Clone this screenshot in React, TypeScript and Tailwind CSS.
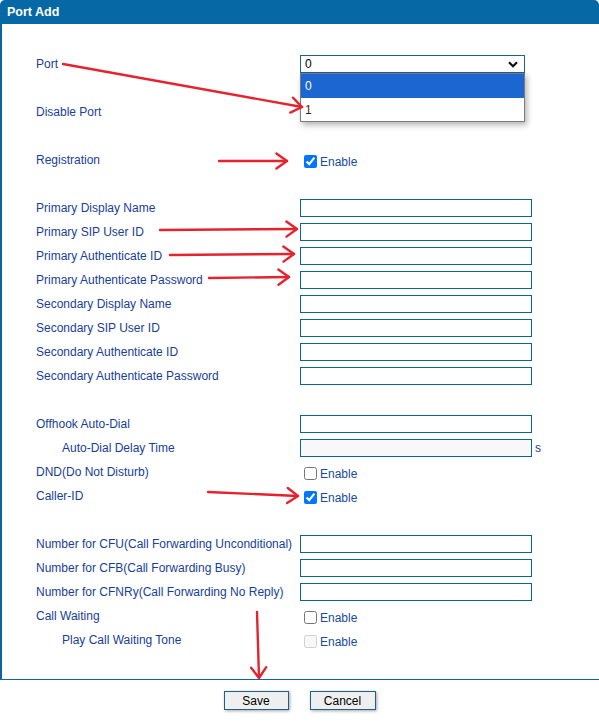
import React from 'react'

type Row =
  | { kind: 'blank' }
  | { kind: 'text'; label: string; indent?: boolean; disabled?: boolean; suffix?: string }
  | { kind: 'check'; label: string; checked?: boolean; disabled?: boolean; indent?: boolean }
  | { kind: 'select'; label: string }

const rows: Row[] = [
  { kind: 'select', label: 'Port' },
  { kind: 'blank' },
  { kind: 'check', label: 'Disable Port' },
  { kind: 'blank' },
  { kind: 'check', label: 'Registration', checked: true },
  { kind: 'blank' },
  { kind: 'text', label: 'Primary Display Name' },
  { kind: 'text', label: 'Primary SIP User ID' },
  { kind: 'text', label: 'Primary Authenticate ID' },
  { kind: 'text', label: 'Primary Authenticate Password' },
  { kind: 'text', label: 'Secondary Display Name' },
  { kind: 'text', label: 'Secondary SIP User ID' },
  { kind: 'text', label: 'Secondary Authenticate ID' },
  { kind: 'text', label: 'Secondary Authenticate Password' },
  { kind: 'blank' },
  { kind: 'text', label: 'Offhook Auto-Dial' },
  { kind: 'text', label: 'Auto-Dial Delay Time', indent: true, disabled: true, suffix: 's' },
  { kind: 'check', label: 'DND(Do Not Disturb)' },
  { kind: 'check', label: 'Caller-ID', checked: true },
  { kind: 'blank' },
  { kind: 'text', label: 'Number for CFU(Call Forwarding Unconditional)' },
  { kind: 'text', label: 'Number for CFB(Call Forwarding Busy)' },
  { kind: 'text', label: 'Number for CFNRy(Call Forwarding No Reply)' },
  { kind: 'check', label: 'Call Waiting' },
  { kind: 'check', label: 'Play Call Waiting Tone', indent: true, disabled: true },
]

// red annotation arrows: [fromX, fromY, tipX, tipY]
const arrows: [number, number, number, number][] = [
  [63, 64, 302, 107],
  [219, 161, 287, 161],
  [160, 230, 297, 229],
  [170, 255, 294, 254],
  [209, 278, 289, 277],
  [208, 492, 298, 496],
  [257, 612, 259, 678],
]

function Arrow({ a }: { a: [number, number, number, number] }) {
  const [fx, fy, tx, ty] = a
  const ang = Math.atan2(ty - fy, tx - fx)
  const len = 13
  const spread = 0.62
  const p1 = [tx - len * Math.cos(ang - spread), ty - len * Math.sin(ang - spread)]
  const p2 = [tx - len * Math.cos(ang + spread), ty - len * Math.sin(ang + spread)]
  return (
    <g>
      <line x1={fx} y1={fy} x2={tx} y2={ty} />
      <polyline points={`${p1[0]},${p1[1]} ${tx},${ty} ${p2[0]},${p2[1]}`} />
    </g>
  )
}

function Control({ row }: { row: Row }) {
  if (row.kind === 'text') {
    return (
      <div className="flex items-center">
        <input
          type="text"
          readOnly={row.disabled}
          className={
            'w-[232px] h-[18px] border border-[#0a64a0] outline-none ' +
            (row.disabled ? 'bg-[#f8f8f8]' : 'bg-white')
          }
        />
        {row.suffix && <span className="ml-[3px] text-[#17409a]">{row.suffix}</span>}
      </div>
    )
  }
  if (row.kind === 'check') {
    return (
      <label className="flex items-center pt-[3px]">
        <input
          type="checkbox"
          defaultChecked={row.checked}
          disabled={row.disabled}
          className="ml-[4px] mr-[3px] w-[13px] h-[13px]"
        />
        <span className="text-[#1a4a9e]">Enable</span>
      </label>
    )
  }
  if (row.kind === 'select') {
    return (
      <div className="relative">
        <div className="w-[225px] h-[18px] border border-[#1d5f96] flex items-center justify-between pl-[4px] pr-[6px] text-black">
          <span>0</span>
          <svg width="10" height="7" viewBox="0 0 10 7">
            <path d="M1 1.2 L5 5.2 L9 1.2" fill="none" stroke="#111" strokeWidth="2.2" />
          </svg>
        </div>
        <div className="absolute left-0 top-[18px] w-[225px] border border-[#7a7a7a] bg-white shadow-[2px_3px_6px_rgba(0,0,0,0.3)] z-10">
          <div className="h-[24px] bg-[#1b66d0] text-white flex items-center pl-[4px]">0</div>
          <div className="h-[23px] text-[#3a2a10] flex items-center pl-[4px]">1</div>
        </div>
      </div>
    )
  }
  return null
}

export default function App() {
  return (
    <div className="relative w-[599px] h-[723px] bg-white font-['Liberation_Sans',Arial,sans-serif] text-[12px]">
      <div className="w-[599px] rounded-t-[5px] overflow-hidden">
        <div className="h-[24px] bg-[#0669a6] text-white font-bold text-[12.5px] flex items-center pl-[7px]">
          Port Add
        </div>
        <div className="border-l-2 border-b border-[#0866a5] pt-[28px] pb-[27px]">
          {rows.map((row, i) =>
            row.kind === 'blank' ? (
              <div key={i} className="h-[24px]" />
            ) : (
              <div key={i} className="flex items-center h-[24px]">
                <div
                  className={
                    'w-[298px] text-[#17409a] whitespace-nowrap ' +
                    (row.indent ? 'pl-[60px]' : 'pl-[34px]')
                  }
                >
                  {row.label}
                </div>
                <Control row={row} />
              </div>
            ),
          )}
        </div>
      </div>

      <div className="flex justify-center gap-[21px] mt-[11px]">
        <button className="w-[65px] h-[19px] bg-[#efefef] border border-[#1f5f8f] text-black shadow-[1px_1px_3px_rgba(0,0,0,0.35)] leading-none">
          Save
        </button>
        <button className="w-[66px] h-[19px] bg-[#efefef] border border-[#1f5f8f] text-black shadow-[1px_1px_3px_rgba(0,0,0,0.35)] leading-none">
          Cancel
        </button>
      </div>

      <svg
        className="absolute inset-0 pointer-events-none z-20"
        width="599"
        height="723"
        fill="none"
        stroke="#e5232f"
        strokeWidth="2.4"
        strokeLinecap="round"
        strokeLinejoin="round"
      >
        {arrows.map((a, i) => (
          <Arrow key={i} a={a} />
        ))}
      </svg>
    </div>
  )
}
